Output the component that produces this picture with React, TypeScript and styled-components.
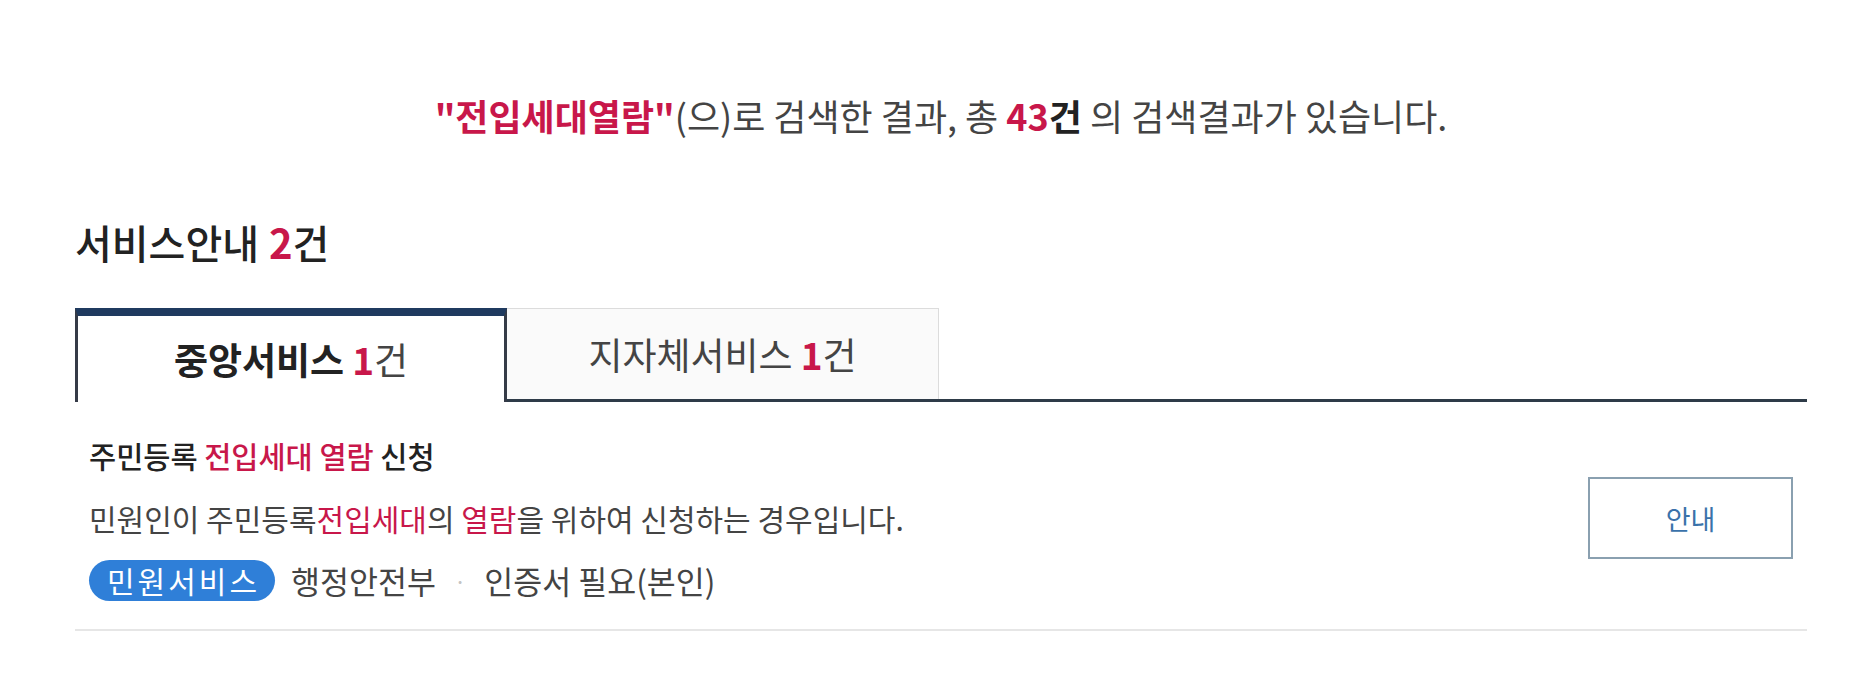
import React from "react";
import styled, { createGlobalStyle } from "styled-components";

const Global = createGlobalStyle`
  html, body { margin: 0; padding: 0; background: #ffffff; }
  body { font-family: "Noto Sans CJK KR", "Noto Sans", sans-serif; color: #333; }
  * { box-sizing: border-box; }
`;

const RED = "#c8174a";

const Page = styled.div`
  padding: 90px 55px 40px 75px;
`;

const Summary = styled.p`
  margin: 0;
  text-align: center;
  font-size: 36px;
  line-height: 50px;
  color: #444;
`;

const Keyword = styled.strong`
  color: ${RED};
  font-weight: 700;
`;

const Strong = styled.strong<{ $red?: boolean }>`
  font-weight: 700;
  color: ${(p) => (p.$red ? RED : "#222")};
`;

const Heading = styled.h2`
  margin: 76px 0 0;
  font-size: 40px;
  line-height: 52px;
  font-weight: 500;
  color: #222;
`;

const Count = styled.span`
  color: ${RED};
  font-weight: 700;
  margin-left: 10px;
`;

const TabList = styled.div`
  margin-top: 40px;
  display: flex;
  align-items: flex-start;
  border-bottom: 3px solid #2e3b48;
`;

const Tab = styled.button<{ $active?: boolean }>`
  width: 432px;
  font-family: inherit;
  font-size: 37px;
  display: flex;
  align-items: center;
  justify-content: center;
  cursor: pointer;
  ${(p) =>
    p.$active
      ? `
    height: 94px;
    margin-bottom: -3px;
    background: #ffffff;
    border: none;
    border-top: 8px solid #1f3a5f;
    border-left: 3px solid #353b47;
    border-right: 3px solid #353b47;
    color: #222;
    font-weight: 700;
  `
      : `
    height: 91px;
    background: #fafafa;
    border: 1px solid #dcdcdc;
    border-bottom: none;
    border-left: none;
    color: #444;
    font-weight: 400;
  `}
`;

const TabNum = styled.span`
  color: ${RED};
  font-weight: 700;
  margin-left: 8px;
`;

const TabUnit = styled.span`
  font-weight: 400;
  color: #444;
`;

const Item = styled.div`
  display: flex;
  align-items: center;
  justify-content: space-between;
  padding: 31px 14px 26px 14px;
  border-bottom: 2px solid #e6e6e6;
`;

const ItemBody = styled.div`
  display: flex;
  flex-direction: column;
`;

const ItemTitle = styled.div`
  font-size: 29.5px;
  line-height: 44px;
  font-weight: 500;
  color: #222;
`;

const Hl = styled.span`
  color: ${RED};
`;

const ItemDesc = styled.div`
  margin-top: 19px;
  font-size: 30px;
  line-height: 44px;
  color: #444;
`;

const Meta = styled.div`
  margin-top: 17px;
  display: flex;
  align-items: center;
  font-size: 31.5px;
  color: #444;
`;

const Pill = styled.span`
  display: inline-flex;
  align-items: center;
  height: 41px;
  padding: 0 15px 0 18px;
  border-radius: 21px;
  background: #2f7fd8;
  color: #ffffff;
  font-size: 30px;
  letter-spacing: 3px;
  margin-right: 16px;
`;

const Dot = styled.span`
  color: #c4c4c4;
  margin: 0 18px;
  font-size: 22px;
`;

const GuideButton = styled.button`
  width: 205px;
  height: 82px;
  background: #ffffff;
  border: 2px solid #8aa0b0;
  color: #3a72aa;
  font-family: inherit;
  font-size: 27px;
  cursor: pointer;
`;

export default function App() {
  return (
    <>
      <Global />
      <Page>
        <Summary>
          <Keyword>"전입세대열람"</Keyword>(으)로 검색한 결과, 총 <Strong $red>43</Strong>
          <Strong>건</Strong> 의 검색결과가 있습니다.
        </Summary>

        <Heading>
          서비스안내<Count>2</Count>건
        </Heading>

        <TabList>
          <Tab $active>
            중앙서비스<TabNum>1</TabNum>
            <TabUnit>건</TabUnit>
          </Tab>
          <Tab>
            지자체서비스<TabNum>1</TabNum>
            <TabUnit>건</TabUnit>
          </Tab>
        </TabList>

        <Item>
          <ItemBody>
            <ItemTitle>
              주민등록 <Hl>전입세대 열람</Hl> 신청
            </ItemTitle>
            <ItemDesc>
              민원인이 주민등록<Hl>전입세대</Hl>의 <Hl>열람</Hl>을 위하여 신청하는 경우입니다.
            </ItemDesc>
            <Meta>
              <Pill>민원서비스</Pill>
              행정안전부
              <Dot>·</Dot>
              인증서 필요(본인)
            </Meta>
          </ItemBody>
          <GuideButton>안내</GuideButton>
        </Item>
      </Page>
    </>
  );
}
